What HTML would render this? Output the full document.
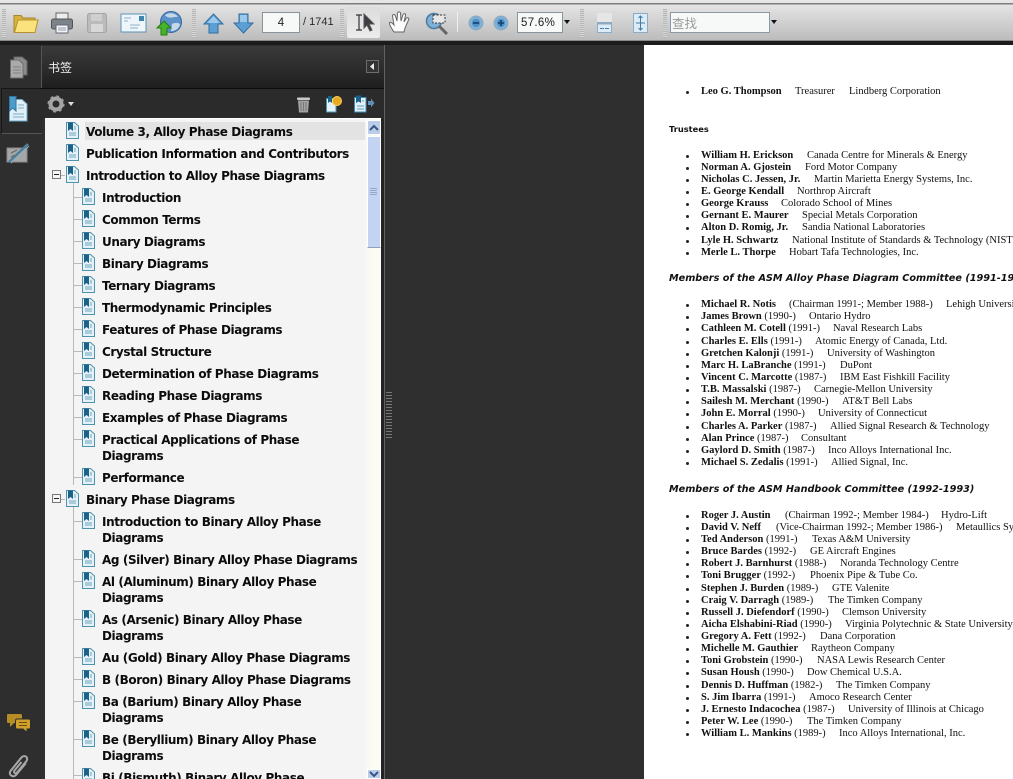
<!DOCTYPE html>
<html><head><meta charset="utf-8"><title>Reader</title>
<style>
html,body{margin:0;padding:0;width:1013px;height:779px;overflow:hidden;background:#2f2f2f}
#r{position:relative;width:1013px;height:779px;overflow:hidden;background:#2f2f2f}
#r div,#r svg{position:absolute}
.tb{left:0;top:0;width:1013px;height:41px;background:linear-gradient(#e6e6e6 0,#e6e6e6 3px,#7d7d7d 3px,#7d7d7d 4px,#e4e4e4 5px,#bcbcbc 40px,#555 41px)}
.blk{left:0;top:41px;width:1013px;height:4px;background:#1c1c1c}
.grip{width:4px;height:29px;top:9px;background:repeating-linear-gradient(#b5b5b5 0 1px,#d8d8d8 1px 2px)}
.inp{background:#f7f8f8;border:1px solid #8a949c;box-sizing:border-box;font:12px "Liberation Sans","DejaVu Sans",sans-serif;color:#222}
.rail{left:0;top:45px;width:41px;height:734px;background:#2e2e2e}
.ph{left:41px;top:46px;width:344px;height:42px;background:linear-gradient(#3a3a3a,#1f1f1f);border-left:1px solid #555;box-sizing:border-box}
.pb{left:41px;top:88px;width:344px;height:31px;background:#2b2b2b;border-top:1px solid #0c0c0c;box-sizing:border-box}
.tree{left:45px;top:118px;width:336px;height:661px;background:linear-gradient(90deg,#f4f4f4 0,#f4f4f4 318px,#fbfbf3 326px,#fdfdf6 336px);border-top:1px solid #fff;box-sizing:border-box}
.sel{left:85px;top:122px;width:280px;height:18px;background:#e3e3e3}
.t{font:bold 12px/16px "DejaVu Sans","Liberation Sans",sans-serif;letter-spacing:-.4px;color:#0c0c0c;white-space:nowrap;margin-top:-1px}
.l1{left:86px}.l2{left:102px}
.ln{background:#b9b9b9}
.box{left:52px;width:9px;height:9px;box-sizing:border-box;border:1px solid #777;background:#f6f6f6}
.box:after{content:"";position:absolute;left:1px;top:3px;width:5px;height:1px;background:#222}
.page{left:644px;top:45px;width:369px;height:734px;background:#fff}
.h{left:669px;font:bold 8.3px/12px "DejaVu Sans",sans-serif;color:#111;white-space:nowrap}
.hi{font-style:oblique;font-size:9.7px}
.d{left:701px;font:10.5px/12px "Liberation Serif",serif;color:#111;white-space:nowrap}
.d:before{content:"";position:absolute;left:-15px;top:5px;width:3px;height:3px;border-radius:50%;background:#222}
.d span{position:absolute;top:0}
.d b{font-weight:bold}
</style></head><body>
<svg width="0" height="0" style="position:absolute"><defs>
<symbol id="bm" viewBox="0 0 14 17"><path d="M1.500 .5H9.500L13.500 4V16.500H1.500Z" fill="#e4f1f8" stroke="#4f93ad"/><path d="M3 .5H8V9L5.500 7 3 9Z" fill="#1d6187"/><path d="M4 11H11M4 13H11M9 7H11M9 5H11" stroke="#6fa5bd"/></symbol>
</defs></svg>
<div id="r">
<div class="tb"></div><div class="blk"></div>
<div class="grip" style="left:2px"></div>
<svg style="left:12px;top:12px" width="27" height="22" viewBox="0 0 27 22"><path d="M2 3.500H9L11 6H23V8H7L4 20H2Z" fill="#d9b13c" stroke="#a5862c"/><path d="M6 8H26L23 20.500H2.500Z" fill="#fbe27c" stroke="#b4922f"/></svg>
<svg style="left:50px;top:11px" width="24" height="24" viewBox="0 0 24 24"><rect x="6" y="2" width="12" height="8" fill="#eee" stroke="#666"/><rect x="1.500" y="8" width="21" height="10" rx="2" fill="#7c8489" stroke="#4e5458"/><rect x="6" y="14" width="12" height="8" fill="#f3f6f8" stroke="#667"/><path d="M8 17H16M8 19H16" stroke="#99a"/></svg>
<svg style="left:86px;top:12px" width="22" height="22" viewBox="0 0 22 22"><rect x="1.500" y="1.500" width="19" height="19" rx="2" fill="#bbb" stroke="#a5a5a5"/><rect x="5" y="2" width="11" height="7" fill="#cfcfcf"/><rect x="5" y="12" width="12" height="8" fill="#d8d8d8"/></svg>
<svg style="left:120px;top:13px" width="27" height="20" viewBox="0 0 27 20"><rect x="1" y="1" width="25" height="18" fill="#eef6fb" stroke="#5d93b5"/><rect x="19" y="3" width="5" height="5" fill="#3f85ad"/><path d="M4 5H11M4 8H8M10 12H20M10 15H18" stroke="#8fb0c5"/></svg>
<svg style="left:156px;top:11px" width="27" height="26" viewBox="0 0 27 26"><circle cx="15" cy="11" r="10.500" fill="#5c91c9" stroke="#35659c"/><path d="M9 4C13 1 20 2 22 6 18 5 13 9 9 4ZM16 13C20 11 24 12 24 14 22 19 18 20 15 20Z" fill="#c5d8e9"/><path d="M8 10L15 17H11V24H5V17H1Z" fill="#46b52b" stroke="#277a15"/></svg>
<div class="grip" style="left:192px"></div>
<svg style="left:203px;top:13px" width="21" height="21" viewBox="0 0 21 21"><path d="M10.500 1L20 11H15V20H6V11H1Z" fill="#5c9fd3" stroke="#2f6ea3"/><path d="M10.500 3L17 10H4Z" fill="#9cc9e9"/></svg>
<svg style="left:233px;top:13px" width="21" height="21" viewBox="0 0 21 21"><path d="M10.500 20L20 10H15V1H6V10H1Z" fill="#5c9fd3" stroke="#2f6ea3"/><path d="M7 2H14V9H7Z" fill="#9cc9e9"/></svg>
<div class="inp" style="left:262px;top:12px;width:38px;height:21px;text-align:center;line-height:20px;font-size:11.500px">4</div>
<div style="left:303px;top:15px;font:11px/15px 'Liberation Sans',sans-serif;color:#2a2a2a;white-space:nowrap">/ 1741</div>
<div class="grip" style="left:340px"></div>
<div style="left:347px;top:7px;width:33px;height:31px;background:linear-gradient(#dcdcdc,#ececec);border-radius:2px"></div>
<svg style="left:354px;top:13px" width="22" height="20" viewBox="0 0 22 20"><path d="M2 2H8M2 17H8M5 2V17" stroke="#333" stroke-width="1.200" fill="none"/><path d="M10 1V15L13 12 16 18 18 17 15 11H20Z" fill="#3a3d44" stroke="#555"/></svg>
<svg style="left:388px;top:10px" width="23" height="25" viewBox="0 0 23 25"><path d="M6 22C4 19 1 15 1.500 12.500 3 11.500 5 14 6 15L4.500 6C4.500 4 7 4 7.500 6L9 11 9.500 3C10 1.500 12 1.500 12.500 3L13 11 15 4.500C16 3 18 3.500 17.500 5.500L16 12 18.500 8C20 7 21.500 8.500 20.500 10L17 18 16 22Z" fill="#fbfbfb" stroke="#666"/></svg>
<svg style="left:425px;top:11px" width="24" height="24" viewBox="0 0 24 24"><circle cx="9" cy="10" r="7.500" fill="#7fb1d6" stroke="#497ca0" stroke-width="1.500"/><path d="M14 15L22 23" stroke="#666" stroke-width="3"/><rect x="8" y="4" width="12" height="8" fill="#e6e6e6" stroke="#333" stroke-dasharray="2 1.500"/></svg>
<div style="left:457px;top:12px;width:1px;height:20px;background:#f0f0f0"></div>
<svg style="left:468px;top:15px" width="16" height="16" viewBox="0 0 16 16"><circle cx="8" cy="8" r="7" fill="#7db0d8" stroke="#92a9bc"/><circle cx="8" cy="8" r="4" fill="#4f8fc2"/><path d="M5 8H11" stroke="#153f70" stroke-width="1.600"/></svg>
<svg style="left:493px;top:15px" width="16" height="16" viewBox="0 0 16 16"><circle cx="8" cy="8" r="7" fill="#7db0d8" stroke="#92a9bc"/><circle cx="8" cy="8" r="4" fill="#4f8fc2"/><path d="M5 8H11M8 5V11" stroke="#153f70" stroke-width="1.600"/></svg>
<div class="inp" style="left:517px;top:12px;width:46px;height:21px;line-height:20px;padding-left:3px;font-size:11.500px;letter-spacing:.3px">57.6%</div>
<svg style="left:564px;top:20px" width="7" height="5" viewBox="0 0 7 5"><path d="M0 0H6L3 4Z" fill="#111"/></svg>
<div class="grip" style="left:580px"></div>
<svg style="left:597px;top:13px" width="15" height="20" viewBox="0 0 15 20"><rect x="0" y="0" width="15" height="9" fill="#e6e6e6"/><rect x="0" y="9" width="15" height="2" fill="#8fa8bf"/><rect x=".5" y="11" width="14" height="8.500" fill="#dcebf5" stroke="#8bacc6"/><path d="M3 15.500H7M8 15.500H12" stroke="#4a7da5"/></svg>
<svg style="left:633px;top:13px" width="15" height="20" viewBox="0 0 15 20"><rect x=".5" y=".5" width="14" height="19" fill="#dcebf5" stroke="#8bacc6"/><path d="M7.500 3V17M3 10H12M5.500 5L7.500 3 9.500 5M5.500 15L7.500 17 9.500 15" stroke="#3f7ba5" fill="none"/></svg>
<div class="grip" style="left:663px"></div>
<div class="inp" style="left:670px;top:12px;width:100px;height:21px;border-color:#8a99a5;line-height:19px;padding-left:1px;font:12.500px/19px 'Noto Sans CJK SC',sans-serif;color:#9a9a9a">查找</div>
<svg style="left:771px;top:20px" width="7" height="5" viewBox="0 0 7 5"><path d="M0 0H6L3 4Z" fill="#111"/></svg>

<div class="rail"></div>
<svg style="left:9px;top:56px" width="19" height="23" viewBox="0 0 19 23"><path d="M5 1H13L18 5V19H5Z" fill="#8b8b8b" stroke="#666"/><path d="M1.500 4H10L14 8V22H1.500Z" fill="#aaa" stroke="#6c6c6c"/><path d="M4 11H12M4 14H12M4 17H12" stroke="#828282"/></svg>
<div style="left:1px;top:88px;width:41px;height:46px;border:1px solid #161616;border-right:0;box-sizing:border-box;background:#2b2b2b;border-bottom:1px solid #555"></div>
<svg style="left:8px;top:96px" width="20" height="26" viewBox="0 0 20 26"><path d="M1.500 3.500H14L19 8V25H1.500Z" fill="#e1f0f8" stroke="#6aa8c6"/><path d="M1.500 .5H8V15L4.700 12 1.500 15Z" fill="#4d9cca" stroke="#2f759f"/><path d="M10 9H16M10 12H16M5 18H16M5 21H16" stroke="#79adc6"/></svg>
<svg style="left:6px;top:142px" width="24" height="22" viewBox="0 0 24 22"><rect x="1" y="6" width="20" height="14" fill="#a6a6a6" stroke="#8a8a8a"/><path d="M5 11L11 8M5 15L9 13" stroke="#666"/><path d="M3 20L22 2" stroke="#4f7f9c" stroke-width="2.500"/><path d="M5 21L23 4" stroke="#93b3c6"/></svg>
<svg style="left:6px;top:713px" width="25" height="21" viewBox="0 0 25 21"><path d="M2 1H14C16 1 16 2 16 3V8C16 10 15 10 14 10H8L4 14V10H2C1 10 1 9 1 8V3C1 2 1 1 2 1Z" fill="#b68c24"/><path d="M11 6H23C24 6 24.500 7 24.500 8V14C24.500 15 24 16 23 16H21V19.500L17 16H11C10 16 9.500 15 9.500 14V8C9.500 7 10 6 11 6Z" fill="#cfa02c" stroke="#2e2e2e"/><path d="M13 9.500H21M13 12.500H21" stroke="#6c4f0a"/></svg>
<svg style="left:7px;top:754px" width="22" height="25" viewBox="0 0 22 25"><path d="M19 9L9 21C6.500 24 1 21 3.500 17L14 4C17 0 22 3 19.500 7L10 18.500C8.500 20.500 6 18.500 7.500 16.500L14.500 8" fill="none" stroke="#a8a8a8" stroke-width="2"/></svg>

<div class="ph"></div>
<div style="left:48px;top:59px;font:12px/17px 'Noto Sans CJK SC',sans-serif;color:#f2f2f2">书签</div>
<div style="left:366px;top:60px;width:13px;height:13px;box-sizing:border-box;border:1px solid #6d6d6d;background:#333"></div>
<svg style="left:370px;top:63px" width="5" height="7" viewBox="0 0 5 7"><path d="M4 0V7L0 3.500Z" fill="#eee"/></svg>
<div class="pb"></div>
<svg style="left:47px;top:95px" width="18" height="18" viewBox="0 0 18 18"><circle cx="9" cy="9" r="5.500" fill="none" stroke="#a5a5a5" stroke-width="4"/><circle cx="9" cy="9" r="7.500" fill="none" stroke="#9d9d9d" stroke-width="2.200" stroke-dasharray="2.700 3.200"/></svg>
<svg style="left:68px;top:102px" width="6" height="4" viewBox="0 0 6 4"><path d="M0 0H6L3 4Z" fill="#ddd"/></svg>
<svg style="left:296px;top:96px" width="15" height="17" viewBox="0 0 15 17"><rect x="1" y="1.500" width="13" height="2.500" rx="1" fill="#c9c9c9"/><path d="M2 4.500H13L12 16.500H3Z" fill="#a3a3a3"/><path d="M5 6V15M7.500 6V15M10 6V15" stroke="#777"/></svg>
<svg style="left:325px;top:95px" width="18" height="18" viewBox="0 0 18 18"><path d="M1.500 3.500H11V17H1.500Z" fill="#e4f1f8" stroke="#4f93ad"/><path d="M3 1H7V8L5 6.500 3 8Z" fill="#1d6187"/><circle cx="12" cy="6" r="4.500" fill="#e9a81d" stroke="#f7d15a"/></svg>
<svg style="left:353px;top:95px" width="22" height="18" viewBox="0 0 22 18"><path d="M1.500 2.500H13V17H1.500Z" fill="#e4f1f8" stroke="#3b89b8"/><path d="M3 .5H8V8L5.500 6.500 3 8Z" fill="#1d6187"/><path d="M4 11H11M4 14H11M9 6H11" stroke="#5e9ab8"/><path d="M15 6H18V3.500L21.500 8 18 12.500V10H15Z" fill="#5e8fb6"/></svg>

<div class="tree"></div>
<div class="sel"></div>
<!-- connectors -->
<div class="ln" style="left:73px;top:183px;width:1px;height:302px"></div>
<div class="ln" style="left:73px;top:507px;width:1px;height:272px"></div>
<div class="ln" style="left:73px;top:197px;width:9px;height:1px"></div><div class="ln" style="left:73px;top:219px;width:9px;height:1px"></div><div class="ln" style="left:73px;top:241px;width:9px;height:1px"></div><div class="ln" style="left:73px;top:263px;width:9px;height:1px"></div><div class="ln" style="left:73px;top:285px;width:9px;height:1px"></div><div class="ln" style="left:73px;top:307px;width:9px;height:1px"></div><div class="ln" style="left:73px;top:329px;width:9px;height:1px"></div><div class="ln" style="left:73px;top:351px;width:9px;height:1px"></div><div class="ln" style="left:73px;top:373px;width:9px;height:1px"></div><div class="ln" style="left:73px;top:395px;width:9px;height:1px"></div><div class="ln" style="left:73px;top:417px;width:9px;height:1px"></div><div class="ln" style="left:73px;top:439px;width:9px;height:1px"></div><div class="ln" style="left:73px;top:477px;width:9px;height:1px"></div>
<div class="ln" style="left:73px;top:521px;width:9px;height:1px"></div><div class="ln" style="left:73px;top:559px;width:9px;height:1px"></div><div class="ln" style="left:73px;top:581px;width:9px;height:1px"></div><div class="ln" style="left:73px;top:619px;width:9px;height:1px"></div><div class="ln" style="left:73px;top:657px;width:9px;height:1px"></div><div class="ln" style="left:73px;top:679px;width:9px;height:1px"></div><div class="ln" style="left:73px;top:701px;width:9px;height:1px"></div><div class="ln" style="left:73px;top:739px;width:9px;height:1px"></div><div class="ln" style="left:73px;top:775px;width:9px;height:1px"></div>
<div class="ln" style="left:61px;top:175px;width:4px;height:1px"></div><div class="ln" style="left:61px;top:499px;width:4px;height:1px"></div>
<div class="box" style="top:170px"></div><div class="box" style="top:494px"></div>

<svg style="left:65px;top:122px" width="14" height="17"><use href="#bm"/></svg><div class="t l1" style="top:125px">Volume 3, Alloy Phase Diagrams</div>
<svg style="left:65px;top:144px" width="14" height="17"><use href="#bm"/></svg><div class="t l1" style="top:147px">Publication Information and Contributors</div>
<svg style="left:65px;top:166px" width="14" height="17"><use href="#bm"/></svg><div class="t l1" style="top:169px">Introduction to Alloy Phase Diagrams</div>
<svg style="left:81px;top:188px" width="14" height="17"><use href="#bm"/></svg><div class="t l2" style="top:191px">Introduction</div>
<svg style="left:81px;top:210px" width="14" height="17"><use href="#bm"/></svg><div class="t l2" style="top:213px">Common Terms</div>
<svg style="left:81px;top:232px" width="14" height="17"><use href="#bm"/></svg><div class="t l2" style="top:235px">Unary Diagrams</div>
<svg style="left:81px;top:254px" width="14" height="17"><use href="#bm"/></svg><div class="t l2" style="top:257px">Binary Diagrams</div>
<svg style="left:81px;top:276px" width="14" height="17"><use href="#bm"/></svg><div class="t l2" style="top:279px">Ternary Diagrams</div>
<svg style="left:81px;top:298px" width="14" height="17"><use href="#bm"/></svg><div class="t l2" style="top:301px">Thermodynamic Principles</div>
<svg style="left:81px;top:320px" width="14" height="17"><use href="#bm"/></svg><div class="t l2" style="top:323px">Features of Phase Diagrams</div>
<svg style="left:81px;top:342px" width="14" height="17"><use href="#bm"/></svg><div class="t l2" style="top:345px">Crystal Structure</div>
<svg style="left:81px;top:364px" width="14" height="17"><use href="#bm"/></svg><div class="t l2" style="top:367px">Determination of Phase Diagrams</div>
<svg style="left:81px;top:386px" width="14" height="17"><use href="#bm"/></svg><div class="t l2" style="top:389px">Reading Phase Diagrams</div>
<svg style="left:81px;top:408px" width="14" height="17"><use href="#bm"/></svg><div class="t l2" style="top:411px">Examples of Phase Diagrams</div>
<svg style="left:81px;top:430px" width="14" height="17"><use href="#bm"/></svg><div class="t l2" style="top:433px">Practical Applications of Phase<br>Diagrams</div>
<svg style="left:81px;top:468px" width="14" height="17"><use href="#bm"/></svg><div class="t l2" style="top:471px">Performance</div>
<svg style="left:65px;top:490px" width="14" height="17"><use href="#bm"/></svg><div class="t l1" style="top:493px">Binary Phase Diagrams</div>
<svg style="left:81px;top:512px" width="14" height="17"><use href="#bm"/></svg><div class="t l2" style="top:515px">Introduction to Binary Alloy Phase<br>Diagrams</div>
<svg style="left:81px;top:550px" width="14" height="17"><use href="#bm"/></svg><div class="t l2" style="top:553px">Ag (Silver) Binary Alloy Phase Diagrams</div>
<svg style="left:81px;top:572px" width="14" height="17"><use href="#bm"/></svg><div class="t l2" style="top:575px">Al (Aluminum) Binary Alloy Phase<br>Diagrams</div>
<svg style="left:81px;top:610px" width="14" height="17"><use href="#bm"/></svg><div class="t l2" style="top:613px">As (Arsenic) Binary Alloy Phase<br>Diagrams</div>
<svg style="left:81px;top:648px" width="14" height="17"><use href="#bm"/></svg><div class="t l2" style="top:651px">Au (Gold) Binary Alloy Phase Diagrams</div>
<svg style="left:81px;top:670px" width="14" height="17"><use href="#bm"/></svg><div class="t l2" style="top:673px">B (Boron) Binary Alloy Phase Diagrams</div>
<svg style="left:81px;top:692px" width="14" height="17"><use href="#bm"/></svg><div class="t l2" style="top:695px">Ba (Barium) Binary Alloy Phase<br>Diagrams</div>
<svg style="left:81px;top:730px" width="14" height="17"><use href="#bm"/></svg><div class="t l2" style="top:733px">Be (Beryllium) Binary Alloy Phase<br>Diagrams</div>
<svg style="left:81px;top:768px" width="14" height="17"><use href="#bm"/></svg><div class="t l2" style="top:771px">Bi (Bismuth) Binary Alloy Phase</div>

<!-- scrollbar -->
<div style="left:367px;top:120px;width:14px;height:15px;background:#bccdea;border:1px solid #fff;box-sizing:border-box"></div>
<svg style="left:369px;top:124px" width="10" height="7" viewBox="0 0 10 7"><path d="M1 6L5 2 9 6" fill="none" stroke="#3b5584" stroke-width="2"/></svg>
<div style="left:367px;top:136px;width:14px;height:112px;background:#c3d3f2;border:1px solid #fff;border-bottom-color:#8fa0bd;box-sizing:border-box"></div>
<div style="left:370px;top:188px;width:7px;height:7px;background:repeating-linear-gradient(#94a8c9 0 1px,transparent 1px 2px)"></div>
<div style="left:367px;top:769px;width:14px;height:10px;background:#bccdea;border:1px solid #fff;box-sizing:border-box"></div>
<svg style="left:369px;top:771px" width="10" height="7" viewBox="0 0 10 7"><path d="M1 1L5 5 9 1" fill="none" stroke="#3b5584" stroke-width="2"/></svg>

<!-- splitter -->
<div style="left:381px;top:119px;width:3px;height:660px;background:#232323"></div>
<div style="left:384px;top:45px;width:1px;height:734px;background:#626262"></div>
<div style="left:386px;top:392px;width:6px;height:48px;background:repeating-linear-gradient(#777 0 1px,#2f2f2f 1px 3px)"></div>

<div class="page"></div>
<div class="d" style="top:86px"><b>Leo G. Thompson</b><span style="left:94px">Treasurer</span><span style="left:148px">Lindberg Corporation</span></div>
<div class="h" style="top:123px">Trustees</div>
<div class="d" style="top:150px"><b>William H. Erickson</b><span style="left:106px">Canada Centre for Minerals &amp; Energy</span></div>
<div class="d" style="top:162px"><b>Norman A. Gjostein</b><span style="left:104px">Ford Motor Company</span></div>
<div class="d" style="top:174px"><b>Nicholas C. Jessen, Jr.</b><span style="left:113px">Martin Marietta Energy Systems, Inc.</span></div>
<div class="d" style="top:186px"><b>E. George Kendall</b><span style="left:96px">Northrop Aircraft</span></div>
<div class="d" style="top:198px"><b>George Krauss</b><span style="left:80px">Colorado School of Mines</span></div>
<div class="d" style="top:210px"><b>Gernant E. Maurer</b><span style="left:101px">Special Metals Corporation</span></div>
<div class="d" style="top:222px"><b>Alton D. Romig, Jr.</b><span style="left:101px">Sandia National Laboratories</span></div>
<div class="d" style="top:235px"><b>Lyle H. Schwartz</b><span style="left:91px">National Institute of Standards &amp; Technology (NIST)</span></div>
<div class="d" style="top:247px"><b>Merle L. Thorpe</b><span style="left:88px">Hobart Tafa Technologies, Inc.</span></div>
<div class="h hi" style="top:273px">Members of the ASM Alloy Phase Diagram Committee (1991-1994)</div>
<div class="d" style="top:299px"><b>Michael R. Notis</b><span style="left:88px">(Chairman 1991-; Member 1988-)</span><span style="left:245px">Lehigh University</span></div>
<div class="d" style="top:311px"><b>James Brown</b> (1990-)<span style="left:108px">Ontario Hydro</span></div>
<div class="d" style="top:323px"><b>Cathleen M. Cotell</b> (1991-)<span style="left:132px">Naval Research Labs</span></div>
<div class="d" style="top:336px"><b>Charles E. Ells</b> (1991-)<span style="left:114px">Atomic Energy of Canada, Ltd.</span></div>
<div class="d" style="top:348px"><b>Gretchen Kalonji</b> (1991-)<span style="left:126px">University of Washington</span></div>
<div class="d" style="top:360px"><b>Marc H. LaBranche</b> (1991-)<span style="left:139px">DuPont</span></div>
<div class="d" style="top:372px"><b>Vincent C. Marcotte</b> (1987-)<span style="left:139px">IBM East Fishkill Facility</span></div>
<div class="d" style="top:384px"><b>T.B. Massalski</b> (1987-)<span style="left:113px">Carnegie-Mellon University</span></div>
<div class="d" style="top:396px"><b>Sailesh M. Merchant</b> (1990-)<span style="left:141px">AT&amp;T Bell Labs</span></div>
<div class="d" style="top:408px"><b>John E. Morral</b> (1990-)<span style="left:117px">University of Connecticut</span></div>
<div class="d" style="top:421px"><b>Charles A. Parker</b> (1987-)<span style="left:129px">Allied Signal Research &amp; Technology</span></div>
<div class="d" style="top:433px"><b>Alan Prince</b> (1987-)<span style="left:100px">Consultant</span></div>
<div class="d" style="top:445px"><b>Gaylord D. Smith</b> (1987-)<span style="left:127px">Inco Alloys International Inc.</span></div>
<div class="d" style="top:457px"><b>Michael S. Zedalis</b> (1991-)<span style="left:130px">Allied Signal, Inc.</span></div>
<div class="h hi" style="top:484px">Members of the ASM Handbook Committee (1992-1993)</div>
<div class="d" style="top:510px"><b>Roger J. Austin</b><span style="left:84px">(Chairman 1992-; Member 1984-)</span><span style="left:240px">Hydro-Lift</span></div>
<div class="d" style="top:522px"><b>David V. Neff</b><span style="left:75px">(Vice-Chairman 1992-; Member 1986-)</span><span style="left:255px">Metaullics Systems</span></div>
<div class="d" style="top:534px"><b>Ted Anderson</b> (1991-)<span style="left:111px">Texas A&amp;M University</span></div>
<div class="d" style="top:546px"><b>Bruce Bardes</b> (1992-)<span style="left:109px">GE Aircraft Engines</span></div>
<div class="d" style="top:558px"><b>Robert J. Barnhurst</b> (1988-)<span style="left:139px">Noranda Technology Centre</span></div>
<div class="d" style="top:570px"><b>Toni Brugger</b> (1992-)<span style="left:109px">Phoenix Pipe &amp; Tube Co.</span></div>
<div class="d" style="top:583px"><b>Stephen J. Burden</b> (1989-)<span style="left:131px">GTE Valenite</span></div>
<div class="d" style="top:595px"><b>Craig V. Darragh</b> (1989-)<span style="left:127px">The Timken Company</span></div>
<div class="d" style="top:607px"><b>Russell J. Diefendorf</b> (1990-)<span style="left:141px">Clemson University</span></div>
<div class="d" style="top:619px"><b>Aicha Elshabini-Riad</b> (1990-)<span style="left:144px">Virginia Polytechnic &amp; State University</span></div>
<div class="d" style="top:631px"><b>Gregory A. Fett</b> (1992-)<span style="left:119px">Dana Corporation</span></div>
<div class="d" style="top:643px"><b>Michelle M. Gauthier</b><span style="left:110px">Raytheon Company</span></div>
<div class="d" style="top:655px"><b>Toni Grobstein</b> (1990-)<span style="left:116px">NASA Lewis Research Center</span></div>
<div class="d" style="top:667px"><b>Susan Housh</b> (1990-)<span style="left:106px">Dow Chemical U.S.A.</span></div>
<div class="d" style="top:680px"><b>Dennis D. Huffman</b> (1982-)<span style="left:135px">The Timken Company</span></div>
<div class="d" style="top:692px"><b>S. Jim Ibarra</b> (1991-)<span style="left:108px">Amoco Research Center</span></div>
<div class="d" style="top:704px"><b>J. Ernesto Indacochea</b> (1987-)<span style="left:147px">University of Illinois at Chicago</span></div>
<div class="d" style="top:716px"><b>Peter W. Lee</b> (1990-)<span style="left:106px">The Timken Company</span></div>
<div class="d" style="top:728px"><b>William L. Mankins</b> (1989-)<span style="left:138px">Inco Alloys International, Inc.</span></div>
</div>
</body></html>
